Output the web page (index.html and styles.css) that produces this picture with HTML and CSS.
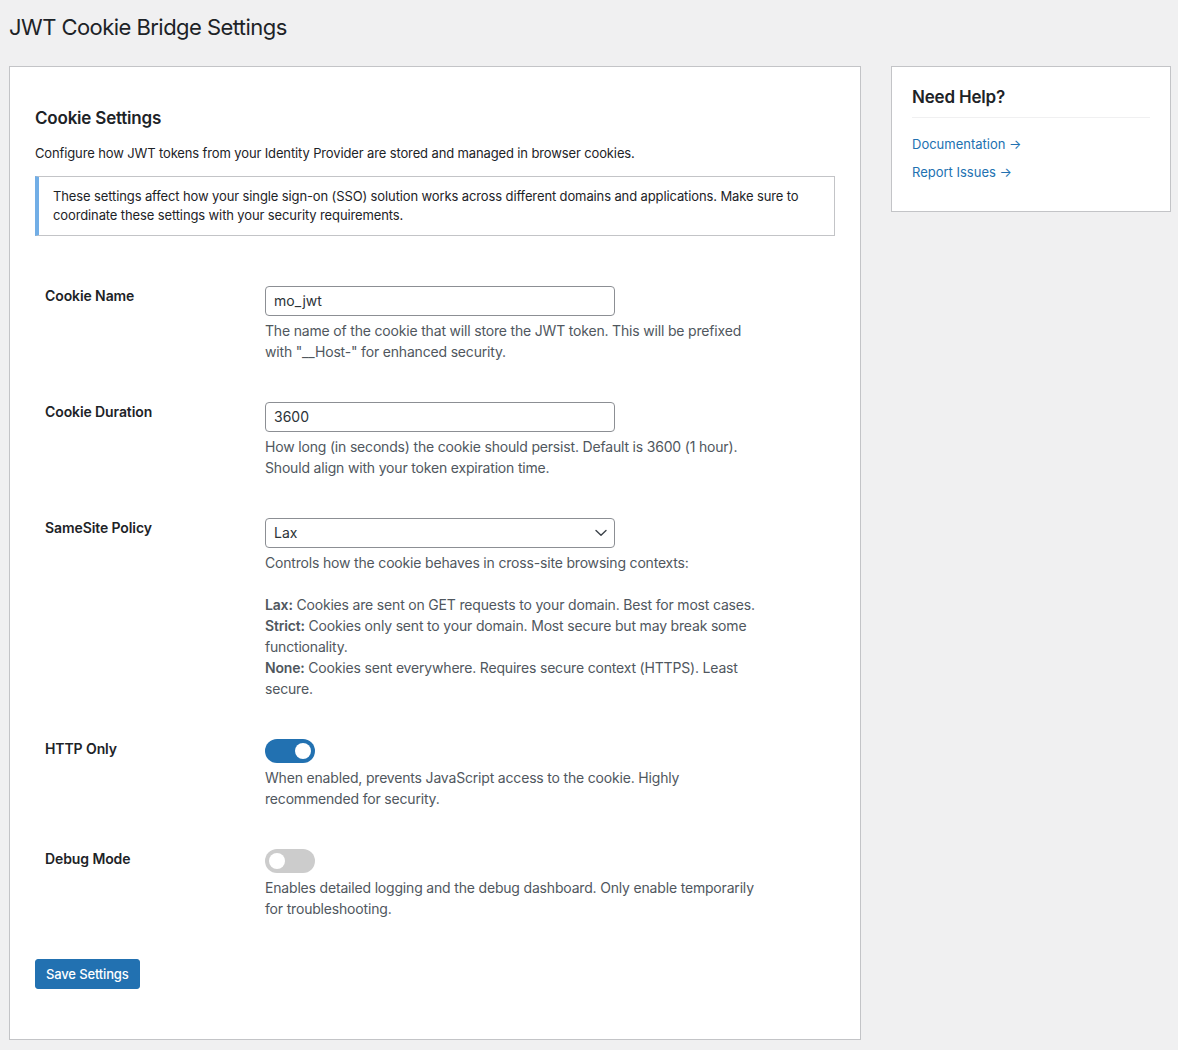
FILE: index.html
```html
<!DOCTYPE html>
<html lang="en">
<head>
<meta charset="utf-8">
<title>JWT Cookie Bridge Settings</title>
<link rel="stylesheet" href="styles.css">
</head>
<body>
<div class="wrap">
  <h1 class="page-title">JWT Cookie Bridge Settings</h1>
  <div class="columns">
    <div class="card main-card">
      <h2 class="card-title">Cookie Settings</h2>
      <p class="intro">Configure how JWT tokens from your Identity Provider are stored and managed in browser cookies.</p>
      <div class="notice">
        <p>These settings affect how your single sign-on (SSO) solution works across different domains and applications. Make sure to coordinate these settings with your security requirements.</p>
      </div>
      <form class="settings-form">
        <div class="form-row">
          <label class="field-label" for="cookie-name">Cookie Name</label>
          <div class="field">
            <input class="text-input" id="cookie-name" type="text" value="mo_jwt">
            <p class="description">The name of the cookie that will store the JWT token. This will be prefixed with "__Host-" for enhanced security.</p>
          </div>
        </div>
        <div class="form-row">
          <label class="field-label" for="cookie-duration">Cookie Duration</label>
          <div class="field">
            <input class="text-input" id="cookie-duration" type="text" value="3600">
            <p class="description">How long (in seconds) the cookie should persist. Default is 3600 (1 hour). Should align with your token expiration time.</p>
          </div>
        </div>
        <div class="form-row">
          <label class="field-label" for="samesite">SameSite Policy</label>
          <div class="field">
            <span class="select-wrap">
              <select class="select-input" id="samesite">
                <option>Lax</option>
                <option>Strict</option>
                <option>None</option>
              </select>
              <svg class="chevron" width="12" height="8" viewBox="0 0 12 8" aria-hidden="true"><path d="M1 1.5 L6 6.3 L11 1.5" fill="none" stroke="#3c434a" stroke-width="1.4" stroke-linecap="round" stroke-linejoin="round"/></svg>
            </span>
            <div class="description">
              <p class="desc-line">Controls how the cookie behaves in cross-site browsing contexts:</p>
              <p class="desc-line desc-gap"><strong>Lax:</strong> Cookies are sent on GET requests to your domain. Best for most cases.</p>
              <p class="desc-line"><strong>Strict:</strong> Cookies only sent to your domain. Most secure but may break some functionality.</p>
              <p class="desc-line"><strong>None:</strong> Cookies sent everywhere. Requires secure context (HTTPS). Least secure.</p>
            </div>
          </div>
        </div>
        <div class="form-row">
          <span class="field-label">HTTP Only</span>
          <div class="field">
            <span class="toggle toggle-on"><span class="knob"></span></span>
            <p class="description">When enabled, prevents JavaScript access to the cookie. Highly recommended for security.</p>
          </div>
        </div>
        <div class="form-row">
          <span class="field-label">Debug Mode</span>
          <div class="field">
            <span class="toggle"><span class="knob"></span></span>
            <p class="description">Enables detailed logging and the debug dashboard. Only enable temporarily for troubleshooting.</p>
          </div>
        </div>
        <div class="submit">
          <button type="button" class="button-primary">Save Settings</button>
        </div>
      </form>
    </div>
    <aside class="card side-card">
      <h2 class="side-title">Need Help?</h2>
      <ul class="help-links">
        <li><a href="#">Documentation →</a></li>
        <li><a href="#">Report Issues →</a></li>
      </ul>
    </aside>
  </div>
</div>
</body>
</html>
```
FILE: styles.css
```css
* { box-sizing: border-box; }

html, body {
  margin: 0;
  padding: 0;
  background: #f0f0f1;
}

body {
  font-family: Inter, "Noto Sans", "Liberation Sans", sans-serif;
  color: #1d2327;
  font-size: 13px;
  line-height: 1.5;
}

.wrap {
  padding: 0 7px 0 9px;
}

.page-title {
  margin: 0;
  padding-top: 12px;
  font-size: 22px;
  font-weight: 400;
  line-height: 30px;
  color: #1d2327;
  letter-spacing: -0.55px;
}

.columns {
  display: flex;
  align-items: flex-start;
  gap: 30px;
  margin-top: 24px;
}

.card {
  background: #fff;
  border: 1px solid #c3c4c7;
}

.main-card {
  width: 852px;
  flex: none;
  padding: 40px 25px 50px;
}

.card-title {
  margin: 0;
  font-size: 17px;
  font-weight: 600;
  line-height: 22px;
  letter-spacing: -0.2px;
}

.intro {
  margin: 15px 0 12px;
  font-size: 13px;
  line-height: 19.5px;
  letter-spacing: -0.13px;
}

.notice {
  border: 1px solid #c3c4c7;
  border-left: 4px solid #72aee6;
  padding: 10px 14px;
}

.notice p {
  margin: 0;
  font-size: 13px;
  line-height: 19px;
  letter-spacing: -0.12px;
}

.settings-form {
  margin-top: 35px;
}

.form-row {
  display: flex;
  padding: 15px 0;
}

.field-label {
  width: 230px;
  flex: none;
  padding: 1px 0 0 10px;
  font-size: 14px;
  font-weight: 600;
  line-height: 18px;
  color: #1d2327;
  letter-spacing: -0.1px;
}

.field {
  flex: 1;
}

.text-input,
.select-input {
  display: block;
  width: 350px;
  height: 30px;
  margin: 0;
  padding: 0 8px;
  border: 1px solid #8c8f94;
  border-radius: 4px;
  background: #fff;
  font-family: inherit;
  font-size: 14px;
  color: #2c3338;
  outline: none;
}

.select-wrap {
  position: relative;
  display: block;
  width: 350px;
}

.select-input {
  appearance: none;
  -webkit-appearance: none;
  padding-right: 24px;
}

.chevron {
  position: absolute;
  right: 8px;
  top: 11px;
}

.description {
  margin: 4px 0 10px;
  max-width: 500px;
  font-size: 14px;
  line-height: 21px;
  color: #50575e;
  letter-spacing: -0.18px;
}

.desc-line {
  margin: 0;
}

.desc-gap {
  margin-top: 21px;
}

.description strong {
  font-weight: 600;
}

.toggle {
  display: flex;
  align-items: center;
  width: 50px;
  height: 24px;
  border-radius: 12px;
  background: #cccccc;
  padding: 0 4px;
}

.toggle-on {
  background: #2271b1;
  justify-content: flex-end;
}

.knob {
  width: 16px;
  height: 16px;
  border-radius: 50%;
  background: #fff;
}

.submit {
  margin-top: 15px;
}

.button-primary {
  height: 30px;
  padding: 0 10px;
  border: 1px solid #2271b1;
  border-radius: 3px;
  background: #2271b1;
  color: #fff;
  font-family: inherit;
  font-size: 13px;
  font-weight: 500;
  line-height: 28px;
  letter-spacing: -0.15px;
  cursor: pointer;
}

.side-card {
  width: 280px;
  flex: none;
  padding: 19px 20px 20px;
}

.side-title {
  margin: 0;
  padding-bottom: 9px;
  border-bottom: 1px solid #f0f0f1;
  font-size: 17px;
  font-weight: 600;
  line-height: 22px;
  letter-spacing: -0.2px;
}

.help-links {
  list-style: none;
  margin: 17px 0 0;
  padding: 0;
}

.help-links li {
  margin: 0 0 8.5px;
  font-size: 13px;
  line-height: 19.5px;
}

.help-links a {
  color: #2271b1;
  text-decoration: none;
}
```
